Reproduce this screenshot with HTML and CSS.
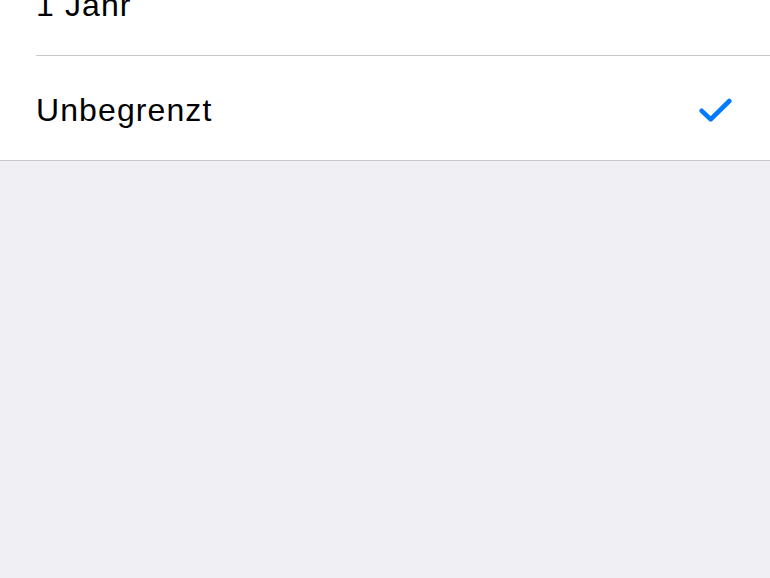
FILE: index.html
```html
<!DOCTYPE html>
<html lang="de">
<head>
  <meta charset="UTF-8" />
  <meta name="viewport" content="width=device-width, initial-scale=1.0"/>
  <title>Nachrichten behalten</title>
  <link rel="stylesheet" href="styles.css">
</head>
<body>

  <!-- Options list, scrolled so the first row is cut off -->
  <section class="group">
    <div class="row">
      <span class="label">1 Jahr</span>
    </div>
    <div class="row selected">
      <span class="label">Unbegrenzt</span>
      <svg class="check" width="34" height="24" viewBox="0 0 34 24">
        <path d="M2.7 12.8 L11.7 21.4 L30.3 3" fill="none" stroke="#007aff" stroke-width="4.6" stroke-linecap="round" stroke-linejoin="round"/>
      </svg>
    </div>
  </section>

</body>
</html>
```

FILE: styles.css
```css
body {
  margin: 0;
  padding: 0;
  background: #efeff4;
  font-family: 'Liberation Sans', Arial, sans-serif;
  color: #000;
}

.group {
  margin-top: -49px;
  background: #fff;
  border-bottom: 1px solid #c8c7cc;
}

.row {
  height: 104px;
  margin-left: 36px;
  padding-right: 37px;
  display: flex;
  align-items: center;
  justify-content: space-between;
  border-bottom: 1px solid #c8c7cc;
}

.row:last-child {
  border-bottom: none;
}

.label {
  font-size: 32px;
  line-height: 1;
  letter-spacing: 1.1px;
  padding-top: 4px;
}

.check {
  display: block;
  margin-top: 4px;
}
```
